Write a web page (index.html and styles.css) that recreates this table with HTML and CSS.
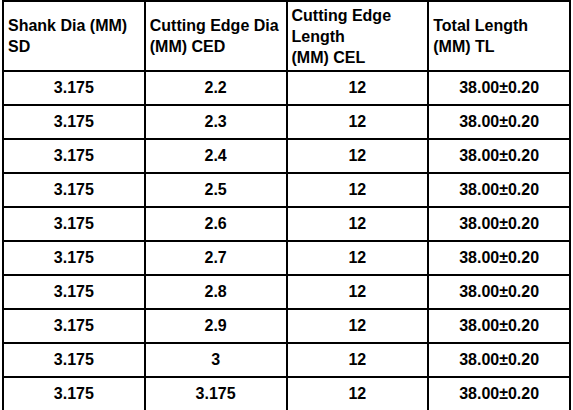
FILE: index.html
```html
<!DOCTYPE html>
<html lang="en">
<head>
    <meta charset="UTF-8">
    <meta name="viewport" content="width=device-width, initial-scale=1.0">
    <title>Cutter sizes</title>
    <link rel="stylesheet" href="styles.css">
</head>
<body>
    <table class="sizes">
        <thead>
            <tr>
                <th>Shank Dia (MM)<br>SD</th>
                <th>Cutting Edge Dia<br>(MM) CED</th>
                <th>Cutting Edge<br>Length<br>(MM) CEL</th>
                <th>Total Length<br>(MM) TL</th>
            </tr>
        </thead>
        <tbody>
            <tr><td>3.175</td><td>2.2</td><td>12</td><td>38.00±0.20</td></tr>
            <tr><td>3.175</td><td>2.3</td><td>12</td><td>38.00±0.20</td></tr>
            <tr><td>3.175</td><td>2.4</td><td>12</td><td>38.00±0.20</td></tr>
            <tr><td>3.175</td><td>2.5</td><td>12</td><td>38.00±0.20</td></tr>
            <tr><td>3.175</td><td>2.6</td><td>12</td><td>38.00±0.20</td></tr>
            <tr><td>3.175</td><td>2.7</td><td>12</td><td>38.00±0.20</td></tr>
            <tr><td>3.175</td><td>2.8</td><td>12</td><td>38.00±0.20</td></tr>
            <tr><td>3.175</td><td>2.9</td><td>12</td><td>38.00±0.20</td></tr>
            <tr><td>3.175</td><td>3</td><td>12</td><td>38.00±0.20</td></tr>
            <tr><td>3.175</td><td>3.175</td><td>12</td><td>38.00±0.20</td></tr>
        </tbody>
    </table>
</body>
</html>
```

FILE: styles.css
```css
* {
    margin: 0;
    padding: 0;
    box-sizing: border-box;
}

body {
    font-family: 'Liberation Sans', Arial, sans-serif;
    background: #fff;
    color: #000;
    padding-left: 2px;
}

.sizes {
    border-collapse: collapse;
    table-layout: fixed;
    width: 569px;
    font-size: 16px;
    font-weight: bold;
}

.sizes th,
.sizes td {
    border: 2px solid #000;
}

.sizes th {
    height: 70px;
    padding: 0 4px;
    text-align: left;
    vertical-align: middle;
    line-height: 21px;
    font-weight: bold;
}

.sizes td {
    height: 34px;
    text-align: center;
    vertical-align: middle;
}
```
